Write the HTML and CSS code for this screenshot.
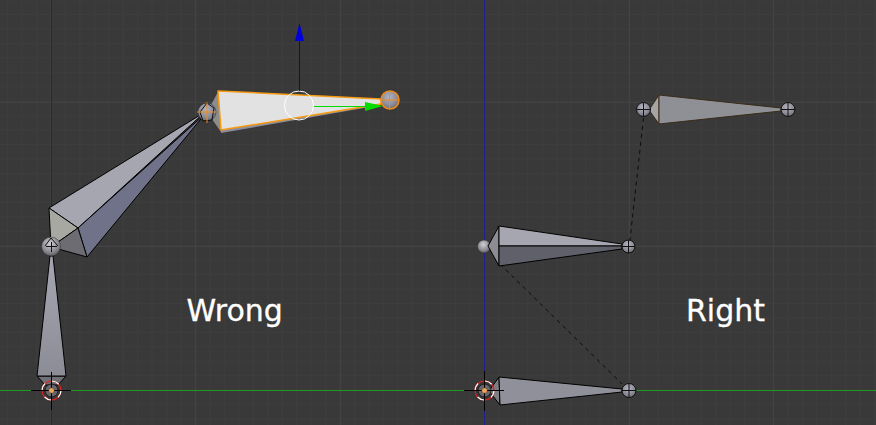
FILE: index.html
```html
<!DOCTYPE html>
<html lang="en">
<head>
<meta charset="utf-8">
<title>Bones</title>
<link rel="stylesheet" href="styles.css">
</head>
<body>
<svg class="viewport" width="876" height="425" viewBox="0 0 876 425" xmlns="http://www.w3.org/2000/svg">
  <defs>
    <pattern id="minor" x="7" y="14" width="14.45" height="14.45" patternUnits="userSpaceOnUse">
      <path d="M0.5 0V14.45M0 0.5H14.45" class="grid-minor"/>
    </pattern>
    <radialGradient id="ball" cx="0.45" cy="0.35" r="0.75">
      <stop offset="0" stop-color="#b4b4c0"/>
      <stop offset="0.6" stop-color="#8a8a96"/>
      <stop offset="1" stop-color="#5a5a64"/>
    </radialGradient>
    <radialGradient id="ballLight" cx="0.45" cy="0.35" r="0.75">
      <stop offset="0" stop-color="#cfcfd4"/>
      <stop offset="0.55" stop-color="#8e8e94"/>
      <stop offset="1" stop-color="#4c4c52"/>
    </radialGradient>
    <linearGradient id="shaft" x1="0" y1="0" x2="0" y2="1">
      <stop offset="0" stop-color="#a6a6b2"/>
      <stop offset="1" stop-color="#8c8c96"/>
    </linearGradient>
  </defs>

  <rect width="876" height="425" class="bg"/>
  <rect width="876" height="425" fill="url(#minor)"/>

  <path d="M195.5 0V425M340.5 0V425M629.5 0V425M773.5 0V425M0 102.5H876M0 246.5H876" class="grid-major"/>
  <path d="M51.5 0V425" class="axis-z"/>
  <path d="M484.5 0V425" class="axis-z"/>
  <path d="M0 390.5H876" class="axis-y"/>

  <!-- Wrong chain -->
  <g class="bone">
    <polygon points="37,376 66,376 58,385 45,385" fill="#6f6f76"/>
    <polygon points="50,256 53,256 66,376 37,376" fill="url(#shaft)"/>
  </g>
  <g>
    <circle cx="51.5" cy="390.5" r="6.5" class="cursor-base"/>
    <circle cx="51.5" cy="390.5" r="9.5" class="cursor-red"/>
    <circle cx="51.5" cy="390.5" r="9.5" class="cursor-white"/>
    <path d="M31 390.5H71M51.5 372V410" class="cursor-cross"/>
    <circle cx="51.5" cy="390.5" r="2.6" class="origin"/>
  </g>

  <g class="bone">
    <polygon points="49,208 78,228 205,112" fill="#a6a6b0"/>
    <polygon points="78,228 87,257 205,114" fill="#6f7289"/>
    <polygon points="49,208 78,228 51,247" fill="#a8a8a2"/>
    <polygon points="78,228 87,257 51,247" fill="#6c6c72"/>
  </g>
  <circle cx="51" cy="246.5" r="9.5" fill="url(#ballLight)" class="ball-edge-soft"/>
  <path d="M45 246L51 238L58 246M46 246.500H57M51.500 242V252" class="thin-dark"/>

  <g>
    <polygon points="207,112 218,92 221,132" class="neck-selected"/>
    <polygon points="218,92 221,133 381,105" class="under-selected"/>
    <polygon points="218,91 221,130 381,104 381,99" class="selected-fill"/>
  </g>
  <circle cx="207" cy="112" r="9" fill="url(#ball)" class="ball-edge-soft"/>
  <path d="M200 112L207 103L214 108L212 120L203 121Z" class="thin-dark"/>
  <path d="M197 112H216M207 102V123" class="orange-thin"/>
  <circle cx="390" cy="100" r="9" fill="url(#ball)" class="orange-ring"/>
  <path d="M381 100H399M389.500 91V109" class="orange-thin"/>

  <!-- Manipulator -->
  <circle cx="299" cy="105.500" r="14.500" class="widget-ring"/>
  <path d="M299.500 41V91" class="arrow-blue-line"/>
  <polygon points="299.500,23 304,41 295,41" class="arrow-blue"/>
  <path d="M314 106.500H366" class="arrow-green-line"/>
  <polygon points="365,102 383,106 365,111" class="arrow-green"/>

  <!-- Right chain -->
  <path d="M643.500 118L630 240" class="dash"/>
  <path d="M500 264L622 384" class="dash"/>

  <circle cx="484" cy="246.500" r="6.500" fill="url(#ballLight)" class="ball-edge-soft"/>
  <g class="bone">
    <polygon points="488,246 499,226 499,266" fill="#8c8c92"/>
    <polygon points="499,226 499,246 622,246 622,244" fill="#a6a6b0"/>
    <polygon points="499,266 499,246 622,246 622,249" fill="#60606a"/>
  </g>
  <circle cx="628.500" cy="246.500" r="6.500" fill="url(#ball)" class="ball-edge"/>
  <path d="M622 246.500H635M628.500 240V253" class="thin-dark"/>

  <g class="bone">
    <polygon points="489,391 499,377 500,405" fill="#7d7d84"/>
    <polygon points="499,377 500,405 622,392 622,389" fill="#90909a"/>
  </g>
  <circle cx="629" cy="390.500" r="7" fill="url(#ball)" class="ball-edge"/>
  <path d="M622 390.500H636M629 384V397" class="thin-dark"/>
  <g>
    <circle cx="484.500" cy="390.500" r="6.500" class="cursor-base"/>
    <circle cx="484.500" cy="390.500" r="9.500" class="cursor-red"/>
    <circle cx="484.500" cy="390.500" r="9.500" class="cursor-white"/>
    <path d="M464 390.500H504M484.500 371V411" class="cursor-cross"/>
    <circle cx="484.500" cy="390.500" r="2.600" class="origin"/>
  </g>

  <g class="bone-brown">
    <polygon points="649,110 659,95 659,124" fill="#a5a5a5"/>
    <polygon points="659,95 659,124 781,111 781,108" fill="#8f8f96"/>
  </g>
  <circle cx="643.500" cy="109.500" r="7" fill="url(#ball)" class="ball-edge"/>
  <path d="M637 109.500H651M643.500 103V117" class="thin-dark"/>
  <circle cx="788" cy="109.500" r="7" fill="url(#ball)" class="ball-edge"/>
  <path d="M781 109.500H795M788 102.500V116.500" class="thin-dark"/>

  <text x="186.500" y="321" class="label">Wrong</text>
  <text x="686" y="321" class="label">Right</text>
</svg>
</body>
</html>
```

FILE: styles.css
```css
html, body {
  margin: 0;
  padding: 0;
  background: #393939;
  overflow: hidden;
}

.viewport {
  display: block;
}

.bg { fill: #393939; }
.grid-minor { fill: none; stroke: #3d3d3d; stroke-width: 1; }
.grid-major { fill: none; stroke: #434343; stroke-width: 1; }
.axis-z { fill: none; stroke: #20208c; stroke-width: 1; }
.axis-y { fill: none; stroke: #1f9a1f; stroke-width: 1; }

.bone polygon { stroke: #000; stroke-width: 1; stroke-linejoin: round; }
.bone-brown polygon { stroke: #3a2c18; stroke-width: 1; stroke-linejoin: round; }
.neck-selected { fill: #8c8c8c; }
.under-selected { fill: #8d8d9c; }
.selected-fill { fill: #e2e2e2; stroke: #f59a12; stroke-width: 1.5; stroke-linejoin: round; }

.ball-edge { stroke: #111; stroke-width: 1; }
.ball-edge-soft { stroke: #2a2a2a; stroke-width: 0.5; }
.orange-ring { stroke: #f08a1a; stroke-width: 1.5; }
.orange-thin { fill: none; stroke: #f08a1a; stroke-width: 1; }
.thin-dark { fill: none; stroke: #111; stroke-width: 1; }

.cursor-base { fill: #66666c; stroke: #222; stroke-width: 1; }
.cursor-red { fill: none; stroke: #e02020; stroke-width: 1.2; }
.cursor-white { fill: none; stroke: #fff; stroke-width: 1.2; stroke-dasharray: 7.5 7.5; }
.cursor-cross { fill: none; stroke: #000; stroke-width: 1; }
.origin { fill: #f0a860; stroke: #7a5020; stroke-width: 0.5; }

.widget-ring { fill: none; stroke: #fff; stroke-width: 1; }
.arrow-blue-line { fill: none; stroke: #0000dc; stroke-width: 1; }
.arrow-blue { fill: #0000dc; }
.arrow-green-line { fill: none; stroke: #00dc00; stroke-width: 1; }
.arrow-green { fill: #00dc00; }

.dash { fill: none; stroke: #0c0c0c; stroke-width: 1; stroke-dasharray: 4 4; }

.label {
  font-family: "DejaVu Sans", sans-serif;
  font-size: 30px;
  fill: #ffffff;
  stroke: #ffffff;
  stroke-width: 0.3;
}
```
